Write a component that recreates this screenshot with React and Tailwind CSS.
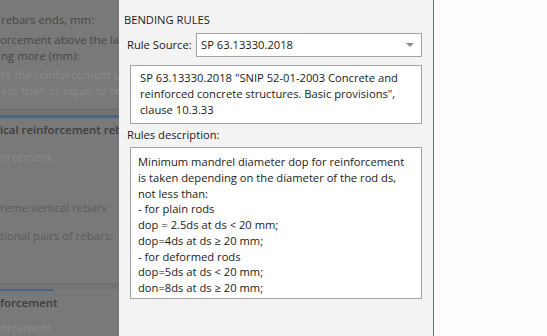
import React from 'react';

const font = { fontFamily: '"Open Sans", "Noto Sans", sans-serif' };

const rules = [
  'Minimum mandrel diameter dop for reinforcement',
  'is taken depending on the diameter of the rod ds,',
  'not less than:',
  '- for plain rods',
  'dop = 2.5ds at ds < 20 mm;',
  'dop=4ds at ds \u2265 20 mm;',
  '- for deformed rods',
  'dop=5ds at ds < 20 mm;',
  'don=8ds at ds \u2265 20 mm;',
];

const BackdropPanel = () => (
  <div className="w-[119px] shrink-0 h-full bg-[#797979] overflow-hidden flex flex-col text-[11.4px] leading-[16px] text-[#474747] whitespace-nowrap">
    <div className="h-[15px]" />
    <div className="pl-[1px]">rebars ends, mm:</div>
    <div className="mt-[4px]">orcement above the last</div>
    <div className="pl-[1px]">ng more (mm):</div>
    <div className="mt-[3px] pl-[1px] text-[#8a8a8a]">te the reinforcement under</div>
    <div className="pl-[1px] text-[#8a8a8a]">ess than or equal to two</div>

    {/* section divider */}
    <div className="mt-[10px] h-[7px] bg-[#737373] border-t border-[#6c6c6c]" />
    <div className="h-[3px] bg-[#4b6682]" />
    <div className="mt-[4px] font-semibold text-[#3d3d3d]">ical reinforcement rebars</div>
    <div className="mt-[11px] text-[#8a8a8a]">orcement</div>
    <div className="mt-[35px] text-[#5c5c5c]">reme vertical rebars</div>
    <div className="mt-[12px] text-[#5c5c5c]">tional pairs of rebars:</div>

    <div className="mt-[39px] h-[7px] bg-[#737373] border-t border-[#6c6c6c]" />
    <div className="h-[3px] w-[54px] bg-[#4b6682]" />
    <div className="mt-[4px] font-semibold text-[#3d3d3d]">forcement</div>
    <div className="mt-[9px] text-[#8a8a8a]">orcement</div>
  </div>
);

export default function App() {
  return (
    <div className="flex w-[547px] h-[336px] overflow-hidden" style={font}>
      <BackdropPanel />

      <div className="w-[314px] shrink-0 h-full bg-[#f3f3f3] text-[11.2px] leading-[16px] text-[#1b1b1b] whitespace-nowrap">
        <div className="pt-[12px] pl-[5px]">BENDING RULES</div>

        <div className="mt-[5px] flex items-center">
          <span className="pl-[8px] w-[77px]">Rule Source:</span>
          <div className="w-[226px] h-[24px] bg-white border border-[#a3a3a3] flex items-center justify-between pl-[4px] pr-[7px]">
            <span>SP 63.13330.2018</span>
            <svg width="8" height="4" viewBox="0 0 8 4">
              <path d="M0 0h8L4 4z" fill="#8a8a8a" />
            </svg>
          </div>
        </div>

        <div className="ml-[11px] mt-[8px] w-[292px] h-[59px] bg-white border border-[#a3a3a3] px-[9px] pt-[4px]">
          <div>SP 63.13330.2018 "SNIP 52-01-2003 Concrete and</div>
          <div>reinforced concrete structures. Basic provisions",</div>
          <div>clause 10.3.33</div>
        </div>

        <div className="mt-[3px] pl-[8px]">Rules description:</div>

        <div className="ml-[11px] mt-[4px] w-[292px] h-[152px] bg-white border border-[#a3a3a3] pl-[7px] pt-[6px] leading-[15.75px]">
          {rules.map((line, i) => (
            <div key={i}>{line}</div>
          ))}
        </div>
      </div>

      <div className="w-px shrink-0 h-full bg-[#2f7bd0]" />
      <div className="flex-1 h-full bg-[#fdfdfd]" />
    </div>
  );
}
